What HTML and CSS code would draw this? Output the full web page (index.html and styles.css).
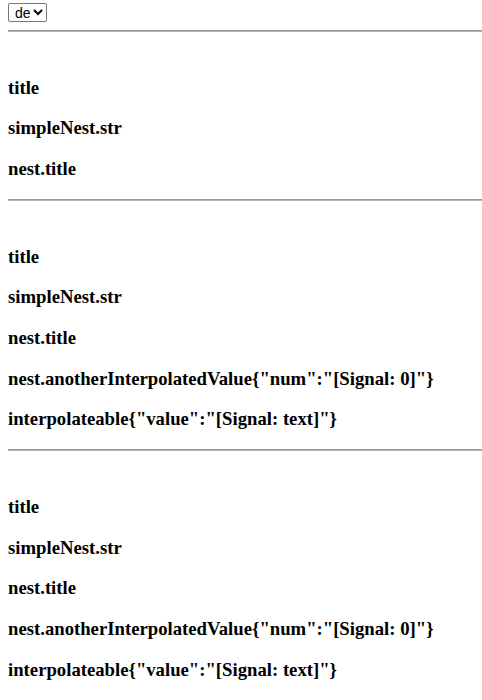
FILE: index.html
```html
<!DOCTYPE html>
<html lang="de">
<head>
<meta charset="utf-8">
<title>i18n</title>
<link rel="stylesheet" href="styles.css">
</head>
<body class="page">
<select class="lang">
<option selected>de</option>
<option>en</option>
</select>
<hr class="rule">
<div class="block">
<h3 class="item">title</h3>
<h3 class="item">simpleNest.str</h3>
<h3 class="item">nest.title</h3>
</div>
<hr class="rule">
<div class="block">
<h3 class="item">title</h3>
<h3 class="item">simpleNest.str</h3>
<h3 class="item">nest.title</h3>
<h3 class="item">nest.anotherInterpolatedValue{"num":"[Signal: 0]"}</h3>
<h3 class="item">interpolateable{"value":"[Signal: text]"}</h3>
</div>
<hr class="rule">
<div class="block">
<h3 class="item">title</h3>
<h3 class="item">simpleNest.str</h3>
<h3 class="item">nest.title</h3>
<h3 class="item">nest.anotherInterpolatedValue{"num":"[Signal: 0]"}</h3>
<h3 class="item">interpolateable{"value":"[Signal: text]"}</h3>
</div>
</body>
</html>
```
FILE: styles.css
```css
html {
  background: #ffffff;
}
.page {
  margin: 0 0 0 8px;
  padding-top: 3px;
  font-family: "Liberation Serif", "Times New Roman", serif;
  font-size: 16px;
  color: #000000;
}
.lang {
  font-family: "Liberation Sans", Arial, sans-serif;
  font-size: 14px;
  height: 19px;
  width: 39px;
  padding: 0 0 0 2px;
  border: 1px solid #767676;
  border-radius: 2px;
  background: #ffffff;
  color: #000000;
  vertical-align: top;
}
.rule {
  margin: 8px 0;
  border: 0;
  border-top: 1px solid #9a9a9a;
  border-bottom: 1px solid #b4b4b4;
  height: 0;
}
.block {
  padding-top: 18px;
}
.item {
  font-size: 18.72px;
  font-weight: bold;
  margin: 18.72px 0;
}
```
